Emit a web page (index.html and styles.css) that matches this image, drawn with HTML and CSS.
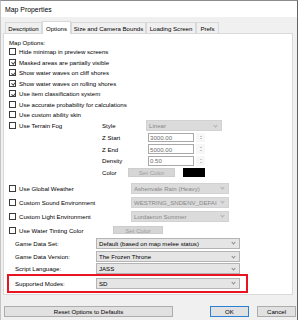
FILE: index.html
```html
<!DOCTYPE html>
<html lang="en">
<head>
    <meta charset="UTF-8">
    <title>Map Properties</title>
    <link rel="stylesheet" href="styles.css">
</head>
<body>
    <div class="window">
        <div class="titlebar">Map Properties</div>

        <div class="dialog">
            <div class="tabs">
                <div class="tab w-desc">Description</div>
                <div class="tab active w-opt">Options</div>
                <div class="tab w-size">Size and Camera Bounds</div>
                <div class="tab w-load">Loading Screen</div>
                <div class="tab w-prefs">Prefs</div>
            </div>

            <div class="panel">
                <div class="heading">Map Options:</div>

                <div class="check"><span class="box"></span>Hide minimap in preview screens</div>
                <div class="check"><span class="box checked"></span>Masked areas are partially visible</div>
                <div class="check"><span class="box checked"></span>Show water waves on cliff shores</div>
                <div class="check"><span class="box checked"></span>Show water waves on rolling shores</div>
                <div class="check"><span class="box checked"></span>Use item classification system</div>
                <div class="check"><span class="box"></span>Use accurate probability for calculations</div>
                <div class="check"><span class="box"></span>Use custom ability skin</div>

                <!-- terrain fog -->
                <div class="fog-row">
                    <div class="check fog-lead"><span class="box"></span>Use Terrain Fog</div>
                    <span class="fog-label w-style">Style</span>
                    <div class="select disabled w-linear"><span>Linear</span><i class="chev"></i></div>
                </div>
                <div class="fog-row">
                    <div class="fog-lead"></div>
                    <span class="fog-label w-z">Z Start</span>
                    <div class="num">3000.00</div><div class="spin"><i class="up"></i><i class="down"></i></div>
                </div>
                <div class="fog-row">
                    <div class="fog-lead"></div>
                    <span class="fog-label w-z">Z End</span>
                    <div class="num">5000.00</div><div class="spin"><i class="up"></i><i class="down"></i></div>
                </div>
                <div class="fog-row">
                    <div class="fog-lead"></div>
                    <span class="fog-label w-z">Density</span>
                    <div class="num">0.50</div><div class="spin"><i class="up"></i><i class="down"></i></div>
                </div>
                <div class="fog-row">
                    <div class="fog-lead"></div>
                    <span class="fog-label w-color">Color</span>
                    <div class="btn disabled w-setcolor">Set Color</div>
                    <div class="swatch"></div>
                </div>

                <!-- environment -->
                <div class="env-row first">
                    <div class="check env-lead"><span class="box"></span>Use Global Weather</div>
                    <div class="select disabled w-env"><span>Ashenvale Rain (Heavy)</span><i class="chev"></i></div>
                </div>
                <div class="env-row">
                    <div class="check env-lead"><span class="box"></span>Custom Sound Environment</div>
                    <div class="select disabled w-env"><span>WESTRING_SNDENV_DEFAI</span><i class="chev"></i></div>
                </div>
                <div class="env-row">
                    <div class="check env-lead"><span class="box"></span>Custom Light Environment</div>
                    <div class="select disabled w-env"><span>Lordaeron Summer</span><i class="chev"></i></div>
                </div>
                <div class="env-row water">
                    <div class="check water-lead"><span class="box"></span>Use Water Tinting Color</div>
                    <div class="btn disabled w-tint">Set Color</div>
                </div>

                <!-- game data -->
                <div class="data-row">
                    <span class="data-label">Game Data Set:</span>
                    <div class="select w-data"><span>Default (based on map melee status)</span><i class="chev"></i></div>
                </div>
                <div class="data-row">
                    <span class="data-label">Game Data Version:</span>
                    <div class="select w-data"><span>The Frozen Throne</span><i class="chev"></i></div>
                </div>
                <div class="data-row short">
                    <span class="data-label">Script Language:</span>
                    <div class="select w-data"><span>JASS</span><i class="chev"></i></div>
                </div>
                <div class="highlight">
                    <div class="data-row inner">
                        <span class="data-label">Supported Modes:</span>
                        <div class="select w-data"><span>SD</span><i class="chev"></i></div>
                    </div>
                </div>
            </div>

            <div class="footer">
                <div class="btn w-reset">Reset Options to Defaults</div>
                <div class="btn primary w-ok">OK</div>
                <div class="btn w-cancel">Cancel</div>
            </div>
        </div>
    </div>
</body>
</html>
```

FILE: styles.css
```css
* {
    box-sizing: border-box;
}

body {
    margin: 0;
    font-family: 'Liberation Sans', Arial, sans-serif;
    font-size: 6.1px;
    color: #000;
    background: #fff;
}

.window {
    width: 298px;
    height: 320px;
    border-top: 1px solid #8c8c8c;
    border-left: 1px solid #c4c4c4;
    border-right: 1px solid #646464;
    background: #f0f0f0;
    display: flex;
    flex-direction: column;
}

.titlebar {
    height: 16px;
    background: #fff;
    font-size: 6.9px;
    padding-left: 4px;
    display: flex;
    align-items: center;
}

.dialog {
    padding: 4px 0 0 2px;
}

/* tabs */
.tabs {
    display: flex;
    align-items: flex-end;
    height: 12px;
    margin-left: 2px;
}

.tab {
    height: 11px;
    border: 1px solid #d9d9d9;
    border-bottom: none;
    background: #f0f0f0;
    display: flex;
    align-items: center;
    justify-content: center;
    white-space: nowrap;
}

.tab.active {
    height: 13px;
    margin-bottom: -1px;
    background: #fff;
    position: relative;
    z-index: 1;
}

.w-desc { width: 37px; }
.w-opt { width: 29px; }
.w-size { width: 75px; }
.w-load { width: 50px; }
.w-prefs { width: 23px; }

.panel {
    width: 290px;
    height: 262px;
    border: 1px solid #d9d9d9;
    background: #fff;
    padding: 3.5px 0 0 5px;
}

.heading {
    height: 9px;
    display: flex;
    align-items: center;
}

/* checkboxes */
.check {
    height: 10.5px;
    display: flex;
    align-items: center;
    gap: 3px;
    white-space: nowrap;
}

.box {
    width: 7px;
    height: 7px;
    border: 1px solid #3a3a3a;
    background: #fff;
    flex-shrink: 0;
    position: relative;
}

.box.checked::after {
    content: '';
    position: absolute;
    left: 1.7px;
    top: 0.3px;
    width: 1.6px;
    height: 3.2px;
    border-right: 0.6px solid #444;
    border-bottom: 0.6px solid #444;
    transform: rotate(40deg);
}

/* terrain fog block */
.fog-row {
    height: 11.7px;
    display: flex;
    align-items: center;
}

.fog-lead {
    width: 93px;
    height: auto;
}

.fog-label { flex-shrink: 0; }
.w-style { width: 44px; }
.w-z { width: 46px; }
.w-color { width: 26px; }

.num {
    width: 46px;
    height: 9.5px;
    border: 1px solid #a9a9a9;
    background: #fff;
    color: #6d6d6d;
    padding-left: 1px;
    display: flex;
    align-items: center;
}

.spin {
    width: 9px;
    height: 9.5px;
    margin-left: 2px;
    background: #f7f7f7;
    display: flex;
    flex-direction: column;
    align-items: center;
    justify-content: center;
    gap: 1.5px;
}

.spin i {
    width: 0;
    height: 0;
    border-left: 1.5px solid transparent;
    border-right: 1.5px solid transparent;
}

.spin .up { border-bottom: 1.5px solid #9a9a9a; }
.spin .down { border-top: 1.5px solid #9a9a9a; }

.swatch {
    width: 22px;
    height: 9px;
    margin-left: 8px;
    background: #000;
}

/* dropdowns */
.select {
    height: 11px;
    border: 1px solid #b4b4b4;
    background: #e5e5e5;
    display: flex;
    align-items: center;
    padding: 0 4px 0 2px;
    white-space: nowrap;
    overflow: hidden;
    flex-shrink: 0;
}

.select span {
    flex: 1;
    overflow: hidden;
}

.select.disabled {
    border-color: #d2d2d2;
    background: #dbdbdb;
    color: #888;
}

.chev {
    width: 3px;
    height: 3px;
    margin: 0 0 1.5px 3px;
    border-right: 0.7px solid #8a8a8a;
    border-bottom: 0.7px solid #8a8a8a;
    transform: rotate(45deg);
    flex-shrink: 0;
}

.select.disabled .chev {
    border-color: #b0b0b0;
}

.w-linear { width: 76px; }
.w-env { width: 98px; }
.w-data { width: 144px; }

/* environment rows */
.env-row {
    height: 14.3px;
    display: flex;
    align-items: center;
}

.env-row.first { margin-top: 2.5px; }
.env-row.water { height: 12.4px; }

.env-lead { width: 122px; }
.water-lead { width: 104px; }

/* buttons */
.btn {
    height: 11px;
    border: 1px solid #adadad;
    background: #e1e1e1;
    display: flex;
    align-items: center;
    justify-content: center;
    white-space: nowrap;
    flex-shrink: 0;
}

.btn.disabled {
    border-color: #cdcdcd;
    background: #d6d6d6;
    color: #9d9d9d;
    height: 8.5px;
}

.btn.primary {
    border-color: #2b7fd4;
}

.w-setcolor { width: 47px; }
.w-tint { width: 50px; }

/* game data rows */
.data-row {
    height: 13.7px;
    display: flex;
    align-items: center;
    padding-left: 6px;
}

.data-row.short { height: 10.3px; }
.data-row.inner { height: 15px; }

.data-label { width: 81px; }

.highlight {
    width: 241px;
    height: 19px;
    margin-left: -2px;
    border: 2px solid #e8141f;
}

/* footer */
.footer {
    display: flex;
    margin-top: 11px;
}

.w-reset { width: 169px; margin-left: 1px; }
.w-ok { width: 39px; margin-left: 37px; }
.w-cancel { width: 39px; margin-left: 8px; }
```
